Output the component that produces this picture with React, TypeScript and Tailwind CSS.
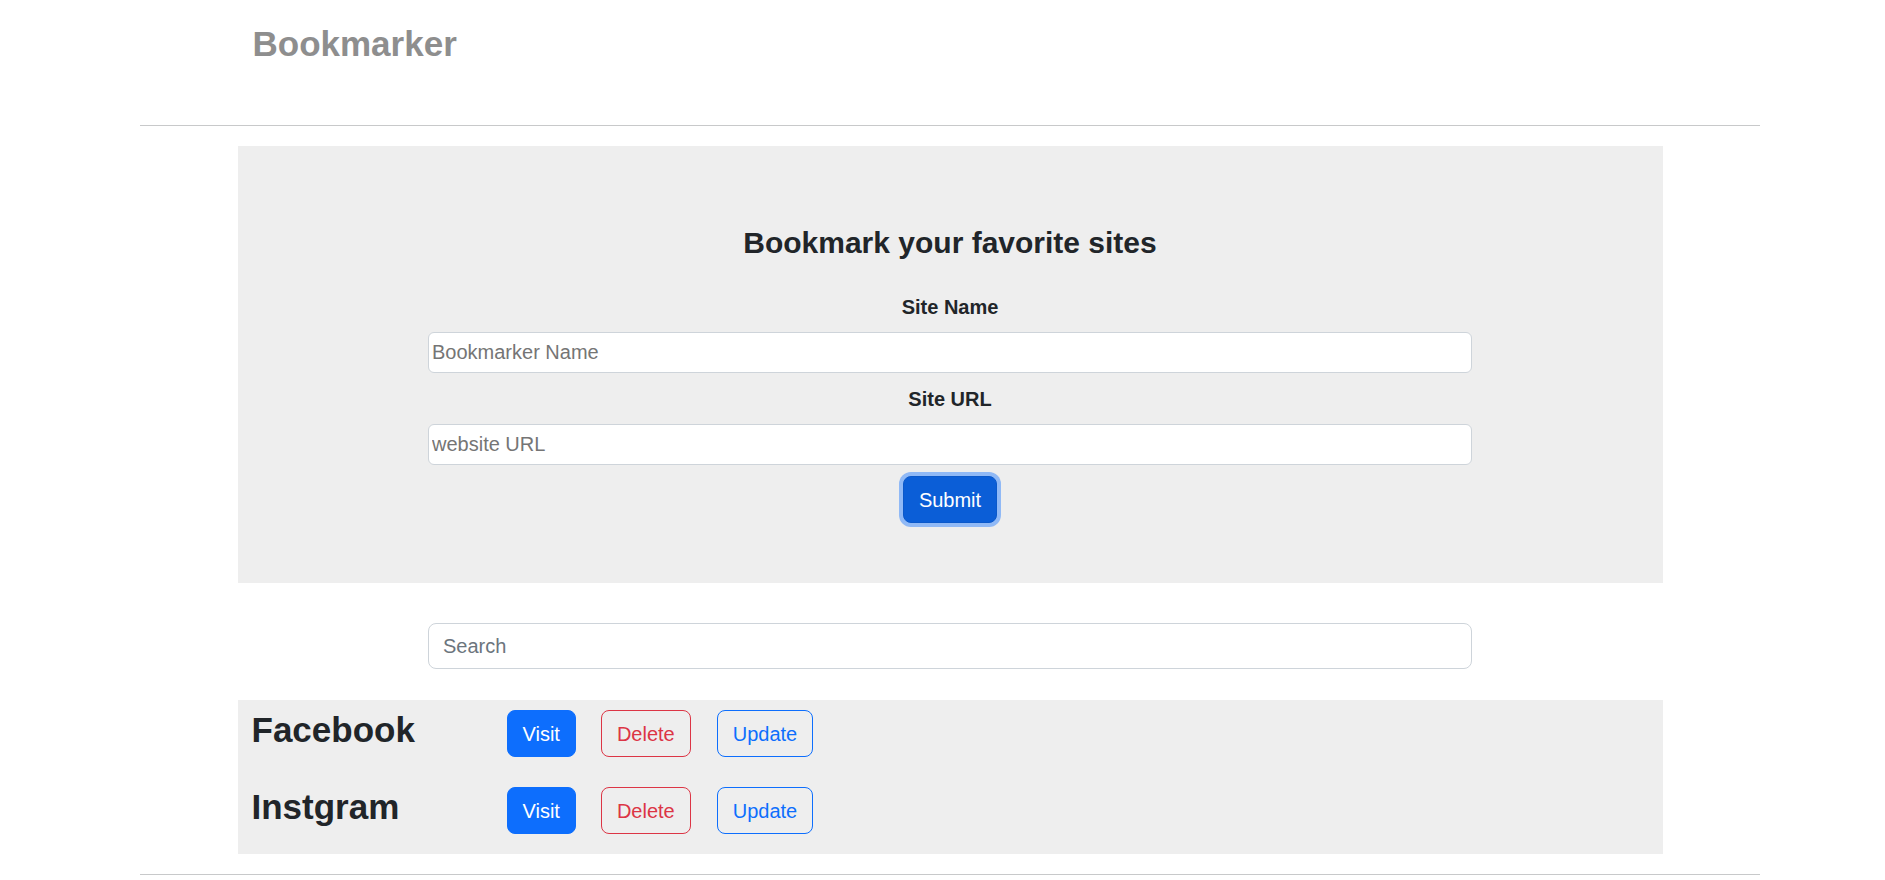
import { useState } from "react";

const SITES = [
  { name: "Facebook", url: "https://facebook.com" },
  { name: "Instgram", url: "https://instagram.com" },
];

export default function App() {
  const [search, setSearch] = useState("");

  return (
    <div className="min-h-screen bg-white font-['Liberation_Sans',Arial,sans-serif] text-[#212529]">
      <div className="ml-[140px] w-[1620px]">
        <header className="mx-auto h-[125px] w-[1425px] pl-[15px] pt-[23px]">
          <a href="#" className="text-[35px] font-bold leading-[42px] text-[#8e8e8e]">
            Bookmarker
          </a>
        </header>
        <hr className="border-0 border-t border-[#c8c9ca]" />

        <section className="mx-auto mt-[20px] flex w-[1425px] flex-col items-center bg-[#eeeeee] pb-[60px] pt-[79px]">
          <h3 className="text-[30px] font-bold leading-[35px]">Bookmark your favorite sites</h3>
          <label className="mt-[35px] text-[20px] font-bold leading-[24px]">Site Name</label>
          <input
            type="text"
            placeholder="Bookmarker Name"
            className="mt-[13px] h-[41px] w-[1044px] rounded-md border border-[#ced4da] bg-white pl-[3px] text-[20px] outline-none placeholder:text-[#757575]"
          />
          <label className="mt-[14px] text-[20px] font-bold leading-[24px]">Site URL</label>
          <input
            type="text"
            placeholder="website URL"
            className="mt-[13px] h-[41px] w-[1044px] rounded-md border border-[#ced4da] bg-white pl-[3px] text-[20px] outline-none placeholder:text-[#757575]"
          />
          <button
            type="button"
            className="mt-[11px] h-[47px] rounded-lg border border-[#0a58ca] bg-[#0b5ed7] px-[15px] text-[20px] leading-[30px] text-white shadow-[0_0_0_4px_rgba(49,132,253,0.5)]"
          >
            Submit
          </button>
        </section>

        <div className="mx-auto mt-[40px] w-[1044px]">
          <input
            type="text"
            value={search}
            onChange={(e) => setSearch(e.target.value)}
            placeholder="Search"
            className="h-[46px] w-full rounded-lg border border-[#ced4da] bg-white px-[14px] text-[20px] outline-none placeholder:text-[#6c757d]"
          />
        </div>

        <section className="mx-auto mt-[31px] flex w-[1425px] flex-col gap-[30px] bg-[#eeeeee] pb-[20px] pl-[14px] pt-[10px]">
          {SITES.filter((s) => s.name.toLowerCase().includes(search.toLowerCase())).map((site) => (
            <div key={site.name} className="flex h-[47px] items-center">
              <h2 className="mb-2 w-[255px] text-[35px] font-bold leading-[42px]">{site.name}</h2>
              <a
                href={site.url}
                className="flex h-[47px] items-center rounded-lg border border-[#0d6efd] bg-[#0d6efd] px-[15px] text-[20px] text-white"
              >
                Visit
              </a>
              <button
                type="button"
                className="ml-[25px] h-[47px] rounded-lg border border-[#dc3545] px-[15px] text-[20px] text-[#dc3545]"
              >
                Delete
              </button>
              <button
                type="button"
                className="ml-[26px] h-[47px] rounded-lg border border-[#0d6efd] px-[15px] text-[20px] text-[#0d6efd]"
              >
                Update
              </button>
            </div>
          ))}
        </section>

        <hr className="mt-[20px] border-0 border-t border-[#c8c9ca]" />
      </div>
    </div>
  );
}
